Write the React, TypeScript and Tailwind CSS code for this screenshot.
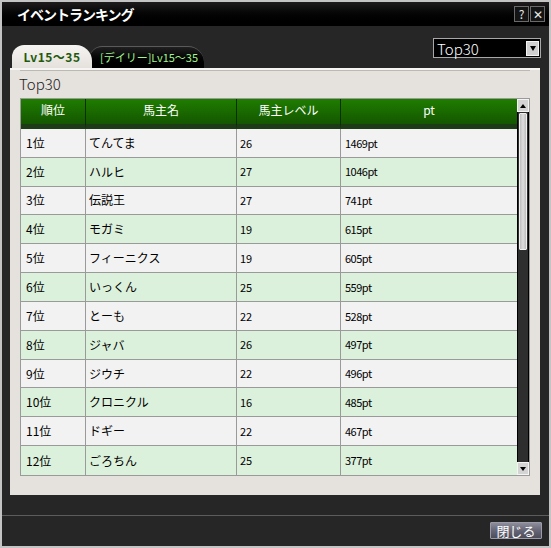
import { useState } from "react";

type Row = { rank: string; name: string; level: number; pt: string };

const rows: Row[] = [
  { rank: "1位", name: "てんてま", level: 26, pt: "1469pt" },
  { rank: "2位", name: "ハルヒ", level: 27, pt: "1046pt" },
  { rank: "3位", name: "伝説王", level: 27, pt: "741pt" },
  { rank: "4位", name: "モガミ", level: 19, pt: "615pt" },
  { rank: "5位", name: "フィーニクス", level: 19, pt: "605pt" },
  { rank: "6位", name: "いっくん", level: 25, pt: "559pt" },
  { rank: "7位", name: "とーも", level: 22, pt: "528pt" },
  { rank: "8位", name: "ジャバ", level: 26, pt: "497pt" },
  { rank: "9位", name: "ジウチ", level: 22, pt: "496pt" },
  { rank: "10位", name: "クロニクル", level: 16, pt: "485pt" },
  { rank: "11位", name: "ドギー", level: 22, pt: "467pt" },
  { rank: "12位", name: "ごろちん", level: 25, pt: "377pt" },
];

const font = "font-['Noto_Sans_CJK_JP','Noto_Sans',sans-serif]";

function TitleButton({ children }: { children: React.ReactNode }) {
  return (
    <button className="flex h-[16px] w-[15px] items-center justify-center border border-[#6a6a6a] bg-[#141414] text-[12px] leading-none text-[#e8e8e8]">
      {children}
    </button>
  );
}

function Scrollbar() {
  return (
    <div className="flex w-[13px] flex-col bg-[#2e2e2e]">
      <div className="flex h-[13px] items-center justify-center border border-[#f4f4f4] bg-[#d4d4d4]">
        <span className="h-0 w-0 border-x-[3px] border-b-[4px] border-x-transparent border-b-black" />
      </div>
      <div className="flex flex-1 flex-col border-x border-black bg-[#2e2e2e]">
        <div className="mx-[1px] mt-[1px] h-[137px] rounded-[1px] border border-[#f0f0f0] bg-gradient-to-r from-[#bdbdbd] via-[#dedede] to-[#bdbdbd]" />
      </div>
      <div className="flex h-[13px] items-center justify-center border border-[#f4f4f4] bg-[#d4d4d4]">
        <span className="h-0 w-0 border-x-[3px] border-t-[4px] border-x-transparent border-t-black" />
      </div>
    </div>
  );
}

export default function App() {
  const [tab, setTab] = useState(0);
  const cols = "grid grid-cols-[65px_151px_104px_176px]";

  return (
    <div className={`flex h-[548px] w-[551px] flex-col border-2 border-[#c4c4c4] bg-[#262626] ${font}`}>
      <div className="flex h-[24px] shrink-0 items-center bg-gradient-to-b from-[#1e1c1c] to-[#000] pl-[15px] pr-[4px]">
        <h1 className="text-[14px] font-bold tracking-[-1px] text-white">イベントランキング</h1>
        <div className="ml-auto flex gap-[1px]">
          <TitleButton>?</TitleButton>
          <TitleButton>✕</TitleButton>
        </div>
      </div>

      <div className="relative flex h-[42px] shrink-0 items-end pl-[10px]">
        <button
          onClick={() => setTab(0)}
          className={`z-10 flex h-[23px] w-[80px] items-center justify-center rounded-tl-[12px] rounded-tr-[16px] text-[12px] font-bold tracking-[0.5px] ${
            tab === 0 ? "bg-gradient-to-b from-[#f6f4f2] to-[#e5e1dd] text-[#1f5a0c]" : "bg-black text-[#a2f58e]"
          }`}
        >
          Lv15～35
        </button>
        <button
          onClick={() => setTab(1)}
          className={`-ml-[2px] flex h-[22px] w-[114px] items-center justify-center rounded-tl-[12px] rounded-tr-[16px] border-t border-[#5a5a5a] pl-[4px] text-[11px] ${
            tab === 1 ? "bg-[#e5e1dd] text-[#1f5a0c]" : "bg-gradient-to-b from-[#202020] to-[#000] text-[#a2f58e]"
          }`}
        >
          [デイリー]Lv15～35
        </button>
        <div className="absolute right-[8px] top-[12px] flex h-[20px] w-[108px] items-center border border-[#a8a8a8] bg-black pl-[3px] pr-[1px]">
          <span className="text-[15px] font-light leading-none text-white">Top30</span>
          <span className="ml-auto flex h-[15px] w-[13px] items-center justify-center border border-[#f4f4f4] bg-[#d0d0d0]">
            <span className="h-0 w-0 border-x-[3px] border-t-[5px] border-x-transparent border-t-black" />
          </span>
        </div>
      </div>

      <div className="ml-[8px] mr-[9px] flex h-[427px] shrink-0 flex-col border-t-2 border-[#f7f5f3] bg-[#e5e1dd] px-[10px]">
        <div className="flex h-[28px] items-center border-t border-[#bcb8b4] pl-[-1px]">
          <span className="-ml-[1px] text-[15px] font-light text-[#1c1c1c]">Top30</span>
        </div>
        <div className="flex h-[378px] border border-[#9a9a9a]">
          <div className="flex flex-1 flex-col">
            <div className={`${cols} h-[30px] bg-gradient-to-b from-[#1f7d00] to-[#124f00] text-[12px] text-white`}>
              {["順位", "馬主名", "馬主レベル", "pt"].map((h, i) => (
                <div
                  key={h}
                  className={`flex items-center justify-center border-b-[5px] border-b-[#1d3b17] pb-[2px] ${
                    i < 3 ? "border-r border-r-[#0b3000]" : ""
                  }`}
                >
                  {h}
                </div>
              ))}
            </div>
            {rows.map((r, i) => (
              <div
                key={r.rank}
                className={`${cols} h-[29px] border-b border-[#9a9a9a] text-[12px] text-black ${
                  i % 2 === 0 ? "bg-[#f2f2f2]" : "bg-[#dcf1dc]"
                } ${i === rows.length - 1 ? "border-b-0" : ""}`}
              >
                <div className="flex items-center border-r border-[#9a9a9a] pl-[5px]">{r.rank}</div>
                <div className="flex items-center border-r border-[#9a9a9a] pl-[3px]">{r.name}</div>
                <div className="flex items-center border-r border-[#9a9a9a] pl-[3px] text-[11px]">{r.level}</div>
                <div className="flex items-center pl-[4px] text-[11px] tracking-[-0.5px]">{r.pt}</div>
              </div>
            ))}
          </div>
          <Scrollbar />
        </div>
      </div>

      <div className="mt-[20px] h-[1px] shrink-0 bg-[#5c5c5c]" />
      <div className="flex flex-1 items-start justify-end pr-[7px] pt-[6px]">
        <button className="flex h-[17px] w-[52px] items-center justify-center rounded-[1px] border border-[#9a9aa8] bg-gradient-to-b from-[#8d8d9c] via-[#666676] to-[#4c4c5a] text-[13px] leading-none text-white">
          閉じる
        </button>
      </div>
    </div>
  );
}
